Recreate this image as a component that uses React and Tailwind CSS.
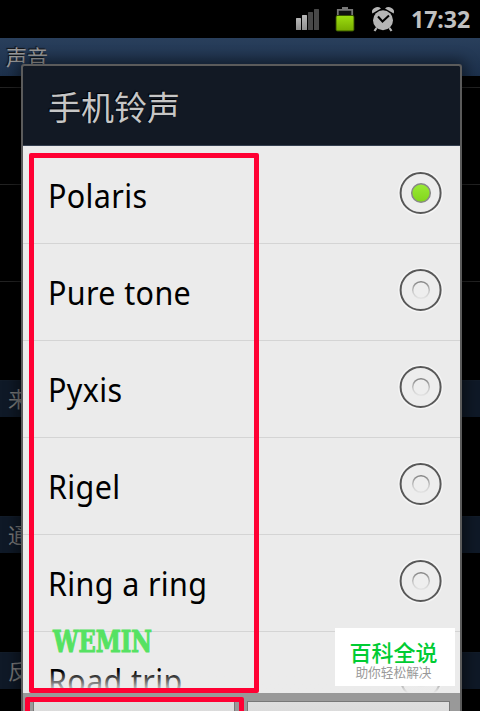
import React from "react";

const ringtones = ["Polaris", "Pure tone", "Pyxis", "Rigel", "Ring a ring", "Road trip"];

function StatusBar() {
  return (
    <div className="flex h-[38px] shrink-0 items-center bg-black">
      <svg className="ml-[295px] h-[38px] w-[102px]" viewBox="0 0 102 38">
        <defs>
          <linearGradient id="battery" x1="0" y1="0" x2="0" y2="1">
            <stop offset="0" stopColor="#9bdc10" />
            <stop offset="1" stopColor="#78ad00" />
          </linearGradient>
          <linearGradient id="signal" x1="0" y1="0" x2="0" y2="1">
            <stop offset="0" stopColor="#b8b8b8" />
            <stop offset="1" stopColor="#909090" />
          </linearGradient>
        </defs>
        <rect x="1" y="18" width="5" height="12" rx=".5" fill="url(#signal)" />
        <rect x="7" y="15" width="5" height="15" rx=".5" fill="url(#signal)" />
        <rect x="13" y="12" width="5" height="18" rx=".5" fill="#484848" />
        <rect x="19" y="9" width="5" height="21" rx=".5" fill="#484848" />
        <path d="M47 7h6v2h-6z" fill="#777" />
        <path d="M42.8 17V9.8h14.4V17" fill="#111" stroke="#777" strokeWidth="1.8" />
        <rect x="40.6" y="15" width="18.8" height="16.5" rx="2" fill="#385300" />
        <rect x="41.5" y="16" width="17" height="14.5" rx="1" fill="url(#battery)" />
        <g fill="#b5b5b5">
          <circle cx="88" cy="20.3" r="10" />
          <path d="M77.300 13.500Q76 9.500 79.500 8 83 6 86 8.500zM98.700 13.500Q100 9.500 96.500 8 93 6 90 8.500z" />
        </g>
        <path d="M81.500 28l-2 3M94.500 28l2 3" stroke="#b5b5b5" strokeWidth="2.2" />
        <path d="M83 16.500l4.500 5 6.500-6" fill="none" stroke="#000" strokeWidth="2" />
      </svg>
      <div className="ml-[14px] origin-left scale-x-[0.98] font-['Noto_Sans',sans-serif] text-[23.5px] leading-[38px] font-bold text-[#c0c0c0]">
        17:32
      </div>
    </div>
  );
}

function SectionHeader({ label }) {
  return (
    <div className="mb-[99px] flex h-[37px] shrink-0 items-center border-t border-[#121c29] bg-[#0f1927] pb-px pl-2 text-[21px] text-[#777]">
      {label}
    </div>
  );
}

function SettingsPage() {
  return (
    <div className="flex h-[711px] flex-col overflow-hidden bg-black font-['Noto_Sans_CJK_SC',sans-serif]">
      <StatusBar />
      <div className="h-[38px] shrink-0 bg-linear-to-b from-[#293f5c] to-[#1c304b] pl-[6px] text-[21px] leading-[37px] text-[#999] [text-shadow:-1px_-1px_1px_#111]">
        声音
      </div>
      <div className="h-3 shrink-0 border-b border-[#222]" />
      <div className="h-[97px] shrink-0 border-b border-[#222]" />
      <div className="h-[97px] shrink-0 border-b border-[#222]" />
      <div className="h-[98px] shrink-0" />
      <SectionHeader label="来" />
      <SectionHeader label="通" />
      <SectionHeader label="反" />
    </div>
  );
}

function Radio({ checked }) {
  return (
    <svg className="h-12 w-12 shrink-0" viewBox="0 0 48 48">
      <defs>
        <linearGradient id="dot" x1="0" y1="0" x2="0" y2="1">
          <stop offset="0" stopColor="#9aeb35" />
          <stop offset="1" stopColor="#82d51c" />
        </linearGradient>
        <linearGradient id="well" x1="0" y1="0" x2="0" y2="1">
          <stop offset="0" stopColor="#858585" />
          <stop offset=".6" stopColor="#cacaca" />
          <stop offset="1" stopColor="#e3e3e3" />
        </linearGradient>
      </defs>
      <circle cx="23.6" cy="24" r="22.5" fill="#f5f5f5" />
      <circle cx="23.6" cy="24" r="20" fill="#ededed" stroke="#585858" strokeWidth="2" />
      {checked ? (
        <circle cx="24" cy="24" r="9.3" fill="url(#dot)" stroke="#888" strokeWidth="1.5" />
      ) : (
        <circle cx="24" cy="24" r="8.3" fill="#eee" stroke="url(#well)" strokeWidth="1.5" />
      )}
    </svg>
  );
}

function RingtoneRow({ name, checked }) {
  return (
    <div className="flex h-[97px] shrink-0 items-start justify-between border-t border-[#d4d4d4] pr-[15px] first:border-transparent">
      <div className="ml-[24.5px] origin-left scale-x-[0.91] pt-[25px] font-['Noto_Sans',sans-serif] text-[33.5px] leading-[46px] tracking-[0.4px] whitespace-nowrap text-black">
        {name}
      </div>
      <div className="pt-[22px]">
        <Radio checked={checked} />
      </div>
    </div>
  );
}

function RingtoneDialog() {
  return (
    <div className="absolute top-16 left-[21px] flex h-[647px] w-[441px] flex-col overflow-hidden rounded-t-[3px] border-2 border-b-0 border-[#5b5b5b] bg-[#999] shadow-[0_0_14px_4px_rgba(0,0,0,0.45)]">
      <div className="flex h-20 shrink-0 items-center border-b border-[#354050] bg-[#121924] pl-[25px] font-['Noto_Sans_CJK_SC',sans-serif] text-[33px] text-[#c6c6c6] [text-shadow:-1px_-1px_1px_#000]">
        <span className="pt-[3px]">手机铃声</span>
      </div>
      <div className="relative flex h-[547px] shrink-0 flex-col overflow-hidden bg-[#ebebeb]">
        {ringtones.map((name, i) => (
          <RingtoneRow key={name} name={name} checked={i === 0} />
        ))}
        <div className="absolute bottom-0 h-[22px] w-full bg-linear-to-b from-transparent to-[#ebebeb]" />
      </div>
      <div className="flex gap-3 px-[10px] pt-2">
        <div className="h-14 w-[203px] border border-[#777] bg-linear-to-b from-[#dedede] to-[#cfcfcf]" />
        <div className="h-14 w-[204px] border border-[#777] bg-linear-to-b from-[#dedede] to-[#cfcfcf]" />
      </div>
    </div>
  );
}

export default function App() {
  return (
    <div className="relative h-[711px] w-[480px] overflow-hidden bg-black">
      <SettingsPage />
      <RingtoneDialog />
      <div className="absolute top-[153px] left-[29px] h-[540px] w-[230px] rounded-[2px] border-[5px] border-[#ff0033]" />
      <div className="absolute top-[697px] left-[25px] h-[60px] w-[219px] rounded-[2px] border-[5px] border-[#ff0033]" />
      <div className="absolute top-[623px] left-[53px] origin-left scale-x-[0.78] font-['DejaVu_Serif',serif] text-[29px] leading-[38px] font-bold text-[#55e262] [-webkit-text-stroke:1.1px_#55e262]">
        WEMIN
      </div>
      <div className="absolute top-[628px] left-[335px] flex h-[58px] w-[120px] flex-col items-center bg-white pr-[3px] font-['Noto_Sans_CJK_SC',sans-serif]">
        <div className="mt-[10px] text-[22px] leading-[26px] font-medium text-[#00cc33]">百科全说</div>
        <div className="text-[12.7px] leading-[15px] text-[#999]">助你轻松解决</div>
      </div>
    </div>
  );
}
